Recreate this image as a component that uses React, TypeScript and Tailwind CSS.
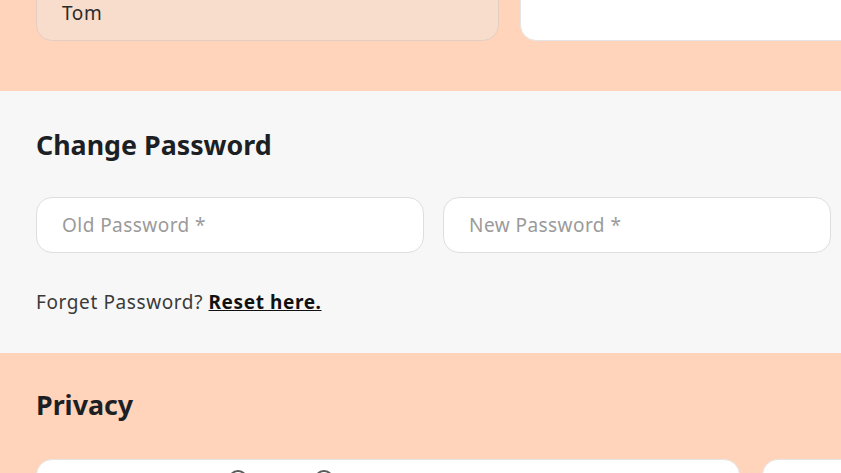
import React from "react";

const font = { fontFamily: '"Noto Sans", "Open Sans", sans-serif' };

export default function App() {
  return (
    <div className="w-[841px] h-[473px] overflow-hidden text-[#1f1f1f]" style={font}>
      {/* Top peach section */}
      <section className="bg-[#FFD4BB] pb-[50px] px-9">
        <div className="-mt-[15px] grid grid-cols-[463px_463px] gap-[21px]">
          <div className="h-[56px] rounded-2xl border border-[#e3cfc2] bg-[#F8DDCC] flex items-center px-[25px] text-[19px] tracking-[0.6px] text-[#2b2b2b]">
            Tom
          </div>
          <div className="h-[56px] rounded-2xl border border-[#e5e5e5] bg-white" />
        </div>
      </section>

      {/* Change password */}
      <section className="bg-[#F7F7F7] px-9 pt-[38px] pb-[39px]">
        <h2 className="text-[26.8px] leading-[32px] font-bold text-[#1c1f24]">Change Password</h2>
        <div className="mt-[36px] grid grid-cols-[388px_388px] gap-[19px]">
          <div className="h-[56px] rounded-2xl border border-[#dedede] bg-white flex items-center px-[25px] text-[19px] tracking-[0.45px] text-[#9a9a9a]">
            Old Password *
          </div>
          <div className="h-[56px] rounded-2xl border border-[#dedede] bg-white flex items-center px-[25px] text-[19px] tracking-[0.45px] text-[#9a9a9a]">
            New Password *
          </div>
        </div>
        <p className="mt-[37px] text-[19px] leading-[24px] tracking-[0.6px] text-[#3a3a3a]">
          Forget Password? <a className="font-bold underline text-[#111]">Reset here.</a>
        </p>
      </section>

      {/* Privacy */}
      <section className="bg-[#FFD4BB] px-9 pt-[36px]">
        <h2 className="text-[26.8px] leading-[32px] font-bold text-[#1c1f24]">Privacy</h2>
        <div className="mt-[38px] grid grid-cols-[704px_704px] gap-[22px]">
          <div className="h-[120px] rounded-2xl border border-[#e5e5e5] bg-white relative">
            <div className="absolute left-[191px] top-[10px] w-[20px] h-[20px] rounded-full border-2 border-[#5a5a5a]" />
            <div className="absolute left-[277px] top-[10px] w-[20px] h-[20px] rounded-full border-2 border-[#5a5a5a]" />
          </div>
          <div className="h-[120px] rounded-2xl border border-[#e5e5e5] bg-white" />
        </div>
      </section>
    </div>
  );
}
